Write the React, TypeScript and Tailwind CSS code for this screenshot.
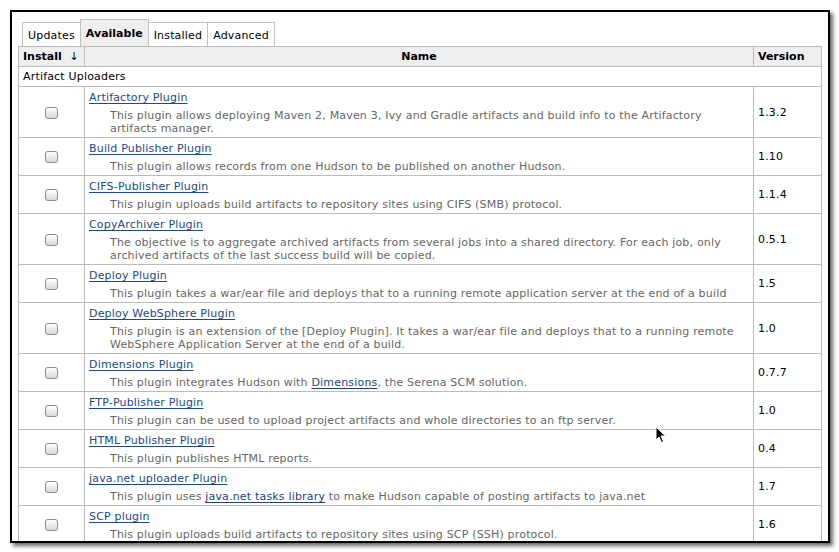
import React from 'react';

type Plugin = {
  name: string;
  desc: React.ReactNode[];
  version: string;
};

const inlineLink = 'text-[#1f3f86] underline underline-offset-2';

const plugins: Plugin[] = [
  {
    name: 'Artifactory Plugin',
    desc: [
      'This plugin allows deploying Maven 2, Maven 3, Ivy and Gradle artifacts and build info to the Artifactory',
      'artifacts manager.',
    ],
    version: '1.3.2',
  },
  {
    name: 'Build Publisher Plugin',
    desc: ['This plugin allows records from one Hudson to be published on another Hudson.'],
    version: '1.10',
  },
  {
    name: 'CIFS-Publisher Plugin',
    desc: ['This plugin uploads build artifacts to repository sites using CIFS (SMB) protocol.'],
    version: '1.1.4',
  },
  {
    name: 'CopyArchiver Plugin',
    desc: [
      'The objective is to aggregate archived artifacts from several jobs into a shared directory. For each job, only',
      'archived artifacts of the last success build will be copied.',
    ],
    version: '0.5.1',
  },
  {
    name: 'Deploy Plugin',
    desc: ['This plugin takes a war/ear file and deploys that to a running remote application server at the end of a build'],
    version: '1.5',
  },
  {
    name: 'Deploy WebSphere Plugin',
    desc: [
      'This plugin is an extension of the [Deploy Plugin]. It takes a war/ear file and deploys that to a running remote',
      'WebSphere Application Server at the end of a build.',
    ],
    version: '1.0',
  },
  {
    name: 'Dimensions Plugin',
    desc: [
      <>
        This plugin integrates Hudson with <a className={inlineLink}>Dimensions</a>, the Serena SCM solution.
      </>,
    ],
    version: '0.7.7',
  },
  {
    name: 'FTP-Publisher Plugin',
    desc: ['This plugin can be used to upload project artifacts and whole directories to an ftp server.'],
    version: '1.0',
  },
  {
    name: 'HTML Publisher Plugin',
    desc: ['This plugin publishes HTML reports.'],
    version: '0.4',
  },
  {
    name: 'java.net uploader Plugin',
    desc: [
      <>
        This plugin uses <a className={inlineLink}>java.net tasks library</a> to make Hudson capable of posting artifacts to java.net
      </>,
    ],
    version: '1.7',
  },
  {
    name: 'SCP plugin',
    desc: ['This plugin uploads build artifacts to repository sites using SCP (SSH) protocol.'],
    version: '1.6',
  },
];

function Checkbox() {
  return (
    <span className="inline-block w-[13px] h-[12px] rounded-[3px] border border-[#8c8c8c] bg-gradient-to-b from-white to-[#d8d8d8] shadow-[inset_0_1px_1px_rgba(255,255,255,0.9)] align-middle" />
  );
}

function Cursor() {
  return (
    <svg className="absolute left-[655px] top-[426px]" width="12" height="18" viewBox="0 0 12 18">
      <path d="M1 1 L1 14 L4 11 L6.5 16.5 L8.5 15.5 L6 10 L10.5 10 Z" fill="#000" stroke="#fff" strokeWidth="1" strokeLinejoin="round" />
    </svg>
  );
}

export default function App() {
  const tabs = ['Updates', 'Available', 'Installed', 'Advanced'];

  return (
    <div
      className="w-[839px] h-[552px] bg-white p-[10px] relative text-[11px] leading-[13px] tracking-[0.18px] text-black"
      style={{ fontFamily: '"DejaVu Sans", Verdana, sans-serif' }}
    >
      <div className="w-[820px] h-[533px] border-2 border-black bg-white shadow-[3px_3px_4px_rgba(0,0,0,0.6)] overflow-hidden px-[6px] pt-[7px]">
        {/* tabs */}
        <div className="flex items-end ml-[4px] h-[27px]">
          {tabs.map((t) => {
            const active = t === 'Available';
            return (
              <div
                key={t}
                className={
                  active
                    ? 'h-[27px] -ml-px border border-b-0 border-[#c0c0c0] bg-[#eeeeee] px-[5px] pt-[7px] font-bold tracking-normal'
                    : 'h-[24px] -ml-px first:ml-0 border border-b-0 border-[#c0c0c0] bg-white px-[5px] pt-[6px]'
                }
              >
                {t}
              </div>
            );
          })}
        </div>

        {/* plugin table */}
        <table className="w-[803px] border-collapse table-fixed">
          <colgroup>
            <col className="w-[66px]" />
            <col className="w-[669px]" />
            <col className="w-[68px]" />
          </colgroup>
          <thead>
            <tr className="bg-[#eeeeee] tracking-normal">
              <th className="border border-[#bbbbbb] text-left pl-[4px] py-[3px] font-bold whitespace-nowrap">
                Install <span className="ml-[4px] font-normal">↓</span>
              </th>
              <th className="border border-[#bbbbbb] text-center py-[3px] font-bold">Name</th>
              <th className="border border-[#bbbbbb] text-left pl-[4px] py-[3px] font-bold">Version</th>
            </tr>
          </thead>
          <tbody>
            <tr>
              <td colSpan={3} className="border border-[#bbbbbb] pl-[4px] py-[3px]">
                Artifact Uploaders
              </td>
            </tr>
            {plugins.map((p) => (
              <tr key={p.name}>
                <td className="border border-[#bbbbbb] text-center align-middle">
                  <Checkbox />
                </td>
                <td className="border border-[#bbbbbb] pl-[4px] pr-[4px] pt-[4px] pb-[2px] align-top">
                  <div>
                    <a className="text-[#204a87] underline underline-offset-2">{p.name}</a>
                  </div>
                  <div className="mt-[5px] pl-[21px] text-[#666666] whitespace-nowrap">
                    {p.desc.map((line, i) => (
                      <div key={i}>{line}</div>
                    ))}
                  </div>
                </td>
                <td className="border border-[#bbbbbb] pl-[4px] align-middle">{p.version}</td>
              </tr>
            ))}
          </tbody>
        </table>
      </div>
      <Cursor />
    </div>
  );
}
